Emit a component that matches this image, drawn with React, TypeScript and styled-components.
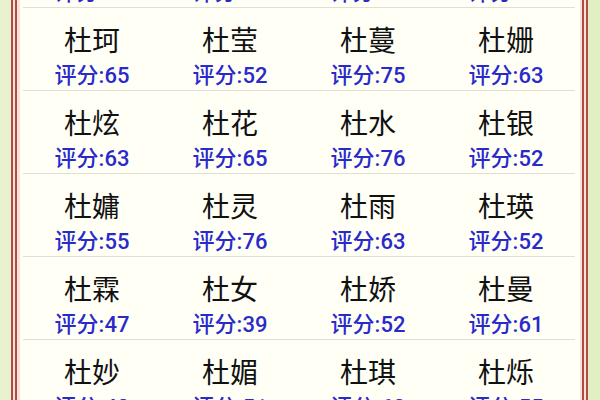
import React from "react";
import styled, { createGlobalStyle } from "styled-components";

const Global = createGlobalStyle`
  html, body { margin: 0; padding: 0; }
  body { font-family: "Roboto", "Noto Sans CJK SC", sans-serif; }
`;

const Page = styled.div`
  width: 600px;
  height: 400px;
  box-sizing: border-box;
  overflow: hidden;
  padding: 0 12px 0 11px;
  background: linear-gradient(90deg, #e8f2cf 0%, #e2efc3 100%);
`;

const Frame = styled.div`
  height: 100%;
  box-sizing: border-box;
  border-left: 6px double #b24c42;
  border-right: 6px double #b24c42;
  background: #f9e2d9;
  padding: 0 2px 0 3px;
`;

const Inner = styled.div`
  height: 100%;
  box-sizing: border-box;
  background: #fffff6;
  padding: 0 5px 0 3px;
  overflow: hidden;
`;

const Table = styled.div`
  margin-top: -75px;
  display: flex;
  flex-direction: column;
`;

const Row = styled.div`
  display: grid;
  grid-template-columns: repeat(4, 1fr);
  height: 83px;
  box-sizing: border-box;
  border-bottom: 1px solid #dfdfd6;
`;

const Cell = styled.div`
  display: flex;
  flex-direction: column;
  align-items: center;
  padding-top: 14px;
`;

const Name = styled.div`
  font-size: 28px;
  line-height: 34px;
  font-weight: 400;
  color: #111111;
  font-family: "Noto Sans CJK SC", sans-serif;
`;

const Score = styled.div`
  margin-top: 7px;
  font-size: 22px;
  line-height: 26px;
  font-weight: 500;
  color: #2a2acb;
  font-family: "Roboto", "Noto Sans CJK SC", sans-serif;
`;

const data: [string, number][][] = [
  [["杜琳", 60], ["杜芳", 55], ["杜萍", 70], ["杜婷", 49]],
  [["杜珂", 65], ["杜莹", 52], ["杜蔓", 75], ["杜姗", 63]],
  [["杜炫", 63], ["杜花", 65], ["杜水", 76], ["杜银", 52]],
  [["杜嫞", 55], ["杜灵", 76], ["杜雨", 63], ["杜瑛", 52]],
  [["杜霖", 47], ["杜女", 39], ["杜娇", 52], ["杜曼", 61]],
  [["杜妙", 40], ["杜媚", 51], ["杜琪", 60], ["杜烁", 55]],
];

export default function App() {
  return (
    <>
      <Global />
      <Page>
        <Frame>
          <Inner>
            <Table>
              {data.map((row, i) => (
                <Row key={i}>
                  {row.map(([n, s]) => (
                    <Cell key={n}>
                      <Name>{n}</Name>
                      <Score>评分:{s}</Score>
                    </Cell>
                  ))}
                </Row>
              ))}
            </Table>
          </Inner>
        </Frame>
      </Page>
    </>
  );
}
